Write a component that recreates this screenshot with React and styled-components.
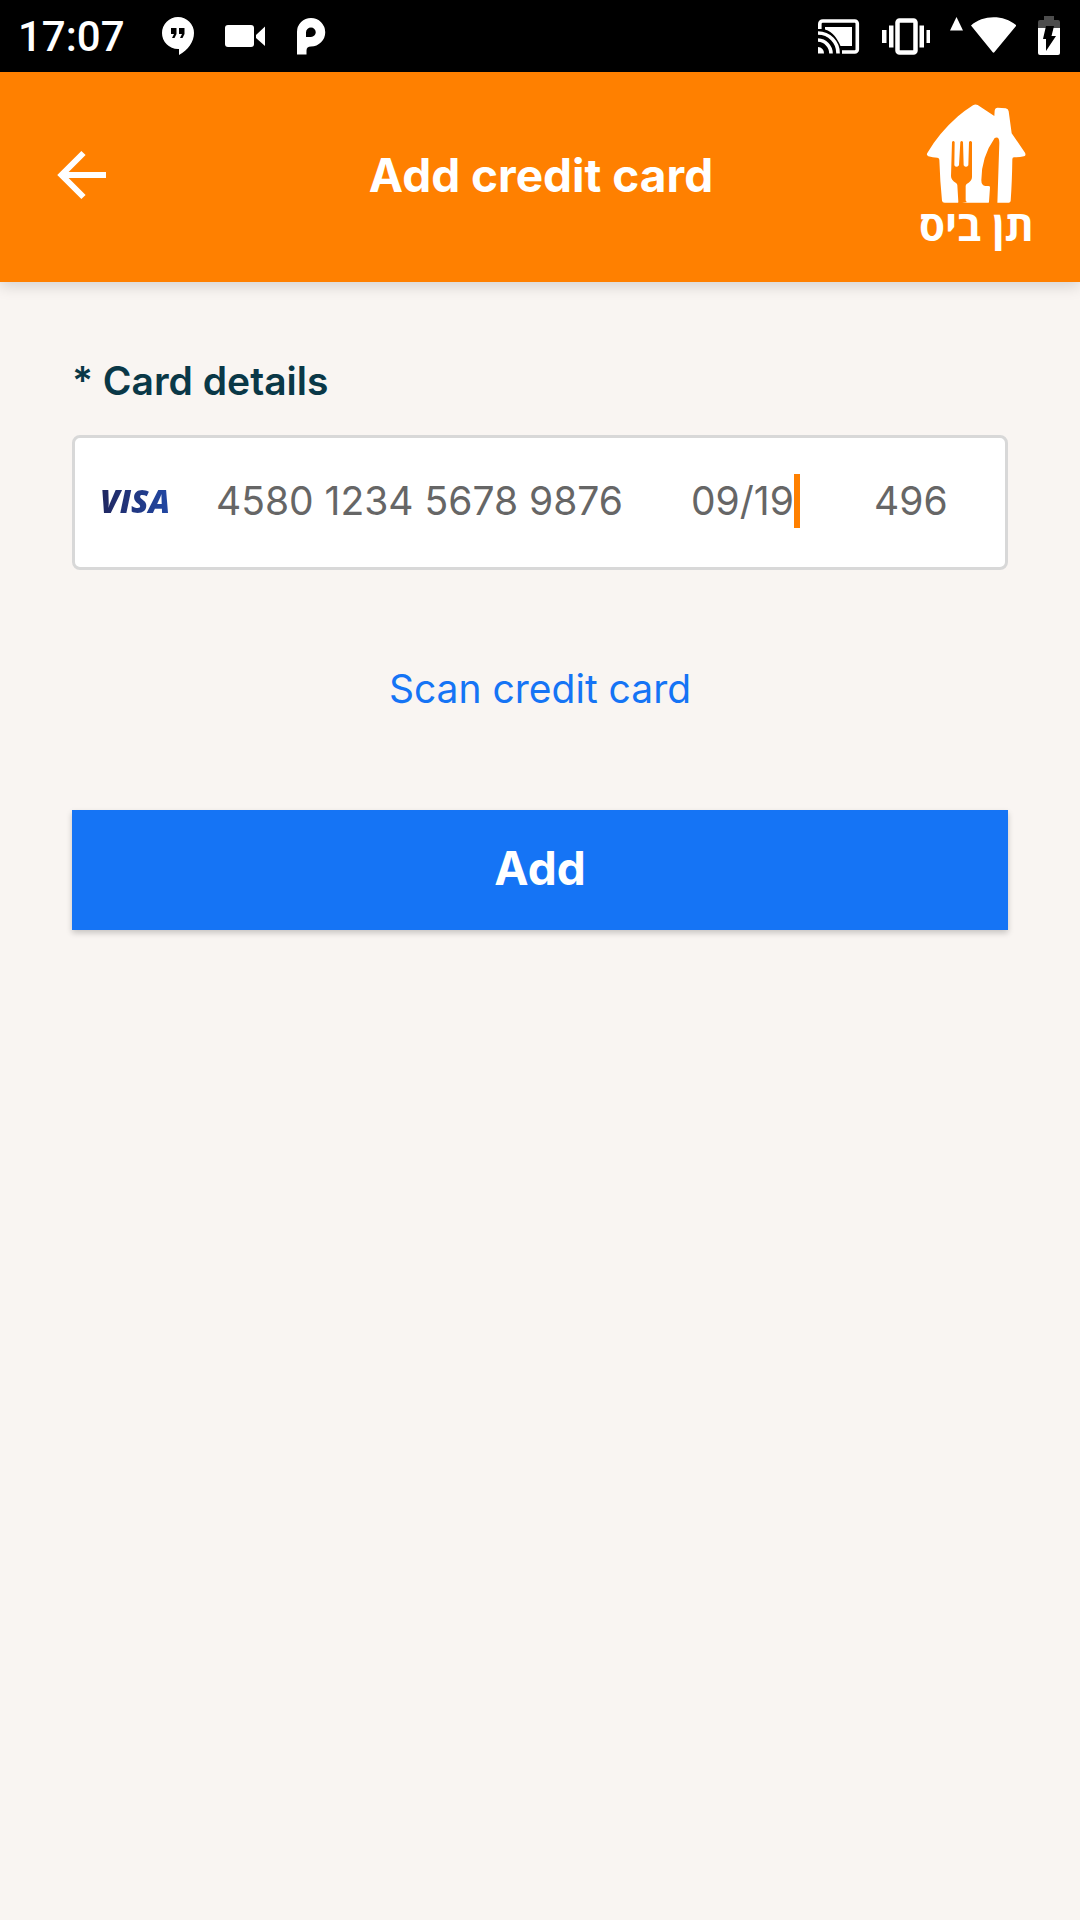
import React from "react";
import styled, { createGlobalStyle } from "styled-components";

const GlobalStyle = createGlobalStyle`
  * { box-sizing: border-box; }
  body {
    margin: 0;
    background: #f9f5f2;
    font-family: Inter, "Open Sans", sans-serif;
  }
`;

const Screen = styled.div`
  display: flex;
  flex-direction: column;
  min-height: 100vh;
`;

const StatusBar = styled.div`
  display: flex;
  align-items: center;
  justify-content: space-between;
  height: 72px;
  padding: 0 20px 0 18px;
  background: #000;
  color: #fff;
`;

const StatusGroup = styled.div`
  display: flex;
  align-items: center;
  gap: ${(p) => p.$gap}px;
`;

const Clock = styled.time`
  padding-top: 2px;
  font: 500 42px/48px Roboto, sans-serif;
`;

const StatusIcon = styled.svg`
  display: block;
  height: 40px;
  fill: #fff;
`;

const Header = styled.header`
  display: grid;
  grid-template-columns: 1fr auto 1fr;
  align-items: center;
  height: 210px;
  padding: 0 46px 4px 48px;
  background: #ff8000;
  color: #fff;
  box-shadow: 0 4px 14px rgba(0, 0, 0, 0.15);
`;

const BackButton = styled.button`
  display: flex;
  align-items: center;
  justify-content: center;
  width: 68px;
  height: 68px;
  padding: 0;
  border: 0;
  background: none;
  color: inherit;
`;

const Title = styled.h1`
  margin: 0;
  font-size: 46px;
  font-weight: 700;
  line-height: 54px;
`;

const Brand = styled.div`
  display: flex;
  flex-direction: column;
  align-items: center;
  justify-self: end;
`;

const BrandName = styled.span`
  font: 700 42px/42px "Open Sans", "DejaVu Sans", sans-serif;
  white-space: nowrap;
`;

const Form = styled.form`
  display: flex;
  flex-direction: column;
  padding: 72px;
`;

const Label = styled.label`
  margin-bottom: 27px;
  color: #0a3847;
  font-size: 39px;
  font-weight: 600;
  line-height: 54px;
`;

const CardField = styled.div`
  display: grid;
  grid-template-columns: 119px 475fr 183fr 109fr;
  align-items: center;
  height: 135px;
  padding: 0 22px 3px;
  border: 3px solid #d8d8d8;
  border-radius: 8px;
  background: #fff;
`;

const VisaMark = styled.span`
  justify-self: start;
  padding-left: 3px;
  background: linear-gradient(90deg, #20255c, #2148a5);
  background-clip: text;
  color: transparent;
  font: italic 800 32px/48px "Open Sans", sans-serif;
`;

const Slot = styled.div`
  display: flex;
  align-items: center;
  min-width: 0;
`;

const DigitsInput = styled.input`
  field-sizing: content;
  min-width: 0;
  padding: 0;
  border: 0;
  outline: 0;
  background: none;
  color: #666;
  font: 400 39px/48px Inter, sans-serif;
`;

const Caret = styled.span`
  flex: none;
  width: 6px;
  height: 54px;
  background: #ff8000;
`;

const ScanLink = styled.a`
  align-self: center;
  margin: 95px 0 97px;
  color: #1574f5;
  font-size: 39px;
  line-height: 48px;
  text-decoration: none;
`;

const SubmitButton = styled.button`
  height: 120px;
  padding: 0 0 4px;
  border: 0;
  background: #1574f5;
  color: #fff;
  font: 700 46px/54px Inter, sans-serif;
  box-shadow: 0 3px 6px rgba(0, 0, 0, 0.2);
`;

const HangoutsIcon = () => (
  <StatusIcon width="32" viewBox="162 16 32 40" aria-hidden="true">
    <path
      fillRule="evenodd"
      d="M178 17a16 16 0 0 1 16 16c0 9-6 17-15 22v-6h-1a16 16 0 0 1 0-32zM171 28v6h3l-2 4h2.500l2-4v-6zM179 28v6h3l-2 4h2.500l2-4v-6z"
    />
  </StatusIcon>
);

const CameraIcon = () => (
  <StatusIcon width="42" viewBox="224 16 42 40" aria-hidden="true">
    <path d="M228 25h23a3 3 0 0 1 3 3v16a3 3 0 0 1-3 3h-23a3 3 0 0 1-3-3V28a3 3 0 0 1 3-3z" />
    <path d="M256 35l9-8.500v19.500l-9-8z" />
  </StatusIcon>
);

const ParkingIcon = () => (
  <StatusIcon width="30" viewBox="296 16 30 40" aria-hidden="true">
    <path
      fillRule="evenodd"
      d="M297 54.500V32a14 14 0 0 1 14-14 14 14 0 0 1 0 28.500q-4.500 0-4.500 4v4zM311 27.500a5 5 0 0 0-5 5V37h5a4.700 4.700 0 0 0 0-9.500z"
    />
  </StatusIcon>
);

const CastIcon = () => (
  <StatusIcon width="42" viewBox="818 16 42 40" aria-hidden="true">
    <g fill="none" stroke="#fff" strokeWidth="3.600">
      <path d="M819.800 29v-5a3 3 0 0 1 3-3h32a2.500 2.500 0 0 1 2.500 2.500v26a2.500 2.500 0 0 1-2.500 2.500H842" />
      <path d="M818 33a20 20 0 0 1 20 20.500M818 40a13.500 13.500 0 0 1 13 13.500" />
    </g>
    <path d="M825 27h27v19h-11.500C837 38 833 32 825 29.500zM818 47a6 6 0 0 1 6 6.500h-6z" />
  </StatusIcon>
);

const VibrateIcon = () => (
  <StatusIcon width="50" viewBox="880 16 50 40" aria-hidden="true">
    <rect x="897.500" y="20.500" width="18" height="32" rx="2" fill="none" stroke="#fff" strokeWidth="4.500" />
    <path d="M882 30h4.500v13H882zM889 25.500h4.500v22H889zM919.500 25.500h4.500v22h-4.500zM926.500 30h4v13h-4z" />
  </StatusIcon>
);

const SignalIcon = () => (
  <StatusIcon width="66" viewBox="950 16 66 40" aria-hidden="true">
    <path d="M956.500 17l6.500 13.500h-13z" />
    <path d="M971 25.500C983 14.500 1004 14.500 1016.500 25.500L994.500 52q-1 1.500-2 0z" />
  </StatusIcon>
);

const BatteryIcon = () => (
  <StatusIcon width="24" viewBox="1036 16 24 40" aria-hidden="true">
    <path fill="#4d4d4d" d="M1044 16h10v4h4a2 2 0 0 1 2 2v6h-22v-6a2 2 0 0 1 2-2h4z" />
    <path d="M1038 28h22v25a2 2 0 0 1-2 2h-18a2 2 0 0 1-2-2z" />
    <path fill="#000" d="M1046 26h8l-2.500 10h4.500l-10 15V39h-3z" />
  </StatusIcon>
);

const BackIcon = () => (
  <svg width="50" height="50" viewBox="0 0 50 50" fill="none" stroke="currentColor" strokeWidth="6" aria-hidden="true">
    <path d="M5 25h44M26.500 3L4.500 25l22 22" />
  </svg>
);

const HouseLogo = () => (
  <svg width="100" height="100" viewBox="77 42 300 300" aria-hidden="true">
    <path
      fill="#fff"
      d="M218 46q7-5 14-1l50 33 1-16q1-9 9-9l24 2q8 1 9 9l9 66 40 58q4 8-3 11-15 3-30 3-5 0-5 6-1 70-5 125-1 5-6 5H133q-7 0-8-6-6-60-8-123-1-6-6-6-14 0-27-4-7-4-3-10 35-60 92-110 20-17 45-33z"
    />
    <g fill="#ff8000">
      <path d="M155 156q4-6 8 0l-1 70q6 9 14 0l4-70q4-6 8 0l2 70q7 9 14 0l2-70q4-6 9 0v105q0 12-16 21-3 2-3 7v42q0 5 5 5l-31 6q4-2 4-6l-3-50q0-4-4-7-15-9-15-21z" />
      <path d="M283 144q14-6 14 14l-6 184h-30q5-2 5-7l3-43q0-4-5-4h-9q-12-1-12-17 0-70 40-127z" />
    </g>
  </svg>
);

export default function App() {
  return (
    <Screen>
      <GlobalStyle />
      <StatusBar>
        <StatusGroup $gap={37}>
          <Clock>17:07</Clock>
          <StatusGroup $gap={30}>
            <HangoutsIcon />
            <CameraIcon />
            <ParkingIcon />
          </StatusGroup>
        </StatusGroup>
        <StatusGroup $gap={20}>
          <CastIcon />
          <VibrateIcon />
          <SignalIcon />
          <BatteryIcon />
        </StatusGroup>
      </StatusBar>
      <Header>
        <BackButton type="button" aria-label="Back">
          <BackIcon />
        </BackButton>
        <Title>Add credit card</Title>
        <Brand>
          <HouseLogo />
          <BrandName lang="he" dir="rtl">תן ביס</BrandName>
        </Brand>
      </Header>
      <Form onSubmit={(e) => e.preventDefault()}>
        <Label htmlFor="card-number">* Card details</Label>
        <CardField>
          <VisaMark>VISA</VisaMark>
          <Slot>
            <DigitsInput id="card-number" inputMode="numeric" defaultValue="4580 1234 5678 9876" />
          </Slot>
          <Slot>
            <DigitsInput aria-label="Expiry date" inputMode="numeric" defaultValue="09/19" />
            <Caret />
          </Slot>
          <Slot>
            <DigitsInput aria-label="Security code" inputMode="numeric" defaultValue="496" />
          </Slot>
        </CardField>
        <ScanLink href="#scan">Scan credit card</ScanLink>
        <SubmitButton type="submit">Add</SubmitButton>
      </Form>
    </Screen>
  );
}
